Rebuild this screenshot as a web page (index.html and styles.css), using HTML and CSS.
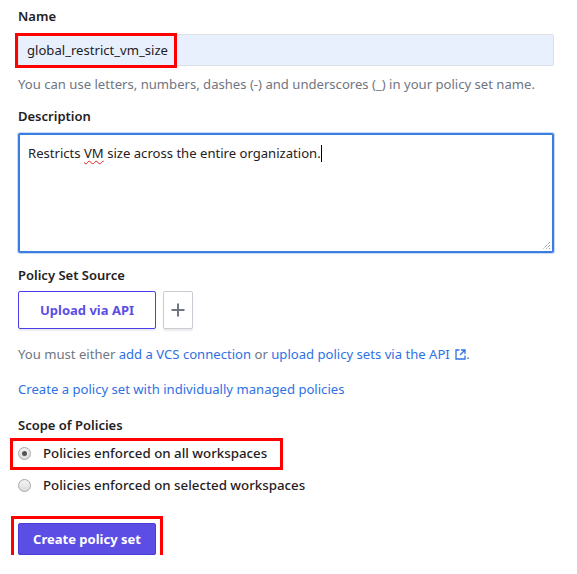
FILE: index.html
```html
<!DOCTYPE html>
<html>
<head>
<meta charset="utf-8">
<link rel="stylesheet" href="styles.css">
</head>
<body>
<form class="form">
  <div class="field">
    <label class="label">Name</label>
    <div class="name-wrap">
      <div class="input">global_restrict_vm_size</div>
      <div class="mark mark-name"></div>
    </div>
    <p class="hint">You can use letters, numbers, dashes (-) and underscores (_) in your policy set name.</p>
  </div>
  <div class="field">
    <label class="label">Description</label>
    <div class="textarea">Restricts <span class="spell">VM</span> size across the entire organization.<span class="caret"></span>
      <svg class="grip" width="10" height="10" viewBox="0 0 10 10"><path d="M9 2 L2 9 M9 5 L5 9 M9 8 L8 9" stroke="#777" stroke-width="1" stroke-dasharray="1 1"/></svg>
    </div>
  </div>
  <div class="field">
    <label class="label">Policy Set Source</label>
    <div class="source-row">
      <button type="button" class="btn-outline">Upload via API</button>
      <button type="button" class="btn-plus" aria-label="Add">
        <svg width="14" height="14" viewBox="0 0 14 14"><path d="M7 0.5v13M0.5 7h13" stroke="#6f7682" stroke-width="2"/></svg>
      </button>
    </div>
    <p class="text">You must either <a class="link">add a VCS connection</a> or <a class="link">upload policy sets via the API <svg class="ext" width="11" height="11" viewBox="0 0 11 11"><path d="M4.5 1H1v9h9V6.5" fill="none" stroke="#2e71e5" stroke-width="1.3"/><path d="M6 1h4v4M10 1 5 6" fill="none" stroke="#2e71e5" stroke-width="1.3"/></svg></a>.</p>
    <p class="text text-last"><a class="link">Create a policy set with individually managed policies</a></p>
  </div>
  <div class="field">
    <label class="label">Scope of Policies</label>
    <div class="radios">
      <label class="radio marked"><span class="dot on"></span>Policies enforced on all workspaces</label>
      <label class="radio"><span class="dot"></span>Policies enforced on selected workspaces</label>
    </div>
  </div>
  <div class="actions">
    <button type="button" class="btn-primary">Create policy set</button>
  </div>
</form>
</body>
</html>
```
FILE: styles.css
```css
*, *::before, *::after { box-sizing: border-box; }
body {
  margin: 0;
  background: #fff;
  font-family: "Noto Sans", "Open Sans", sans-serif;
  font-size: 13.1px;
  color: #1f2124;
}
.form {
  padding: 6px 23px 0 18px;
}
.label {
  display: block;
  font-weight: 600;
  font-size: 13px;
  line-height: 20px;
  color: #1f2124;
}
.field {
  display: flow-root;
  margin-bottom: 12px;
}
.name-wrap {
  position: relative;
  margin-top: 8px;
}
.input {
  height: 32px;
  background: #e8f0fe;
  border: 1px solid #dcdfe4;
  border-radius: 2px;
  padding: 0 8px;
  line-height: 30px;
  color: #1f2124;
}
.mark {
  position: absolute;
  border: 3px solid #ff0000;
}
.mark-name {
  left: -3px;
  top: -1px;
  width: 162px;
  height: 35px;
}
.hint {
  margin: 8px 0 0;
  color: #6f7682;
  line-height: 20px;
}
.textarea {
  position: relative;
  margin-top: 7px;
  height: 120px;
  border: 2px solid #3a7ee0;
  box-shadow: 0 0 0 1px #c6d9f7;
  border-radius: 2px;
  padding: 8px 8px;
  line-height: 20px;
  color: #1f2124;
}
.spell {
  text-decoration: underline wavy #e02020;
  text-decoration-thickness: 1px;
  text-underline-offset: 2px;
}
.caret {
  display: inline-block;
  width: 1px;
  height: 17px;
  background: #000;
  vertical-align: -4px;
}
.grip {
  position: absolute;
  right: 1px;
  bottom: 1px;
}
.source-row {
  display: flex;
  gap: 7px;
  margin-top: 6px;
}
.btn-outline {
  width: 138px;
  height: 38px;
  background: #fff;
  border: 1px solid #4b3cf0;
  border-radius: 2px;
  box-shadow: 0 2px 1px rgba(0,0,0,0.08);
  font-family: inherit;
  font-size: 13px;
  font-weight: 700;
  color: #5c4ee5;
}
.btn-plus {
  width: 30px;
  height: 38px;
  background: #fff;
  border: 1px solid #c8ccd3;
  border-radius: 2px;
  box-shadow: 0 2px 1px rgba(0,0,0,0.08);
  display: flex;
  align-items: center;
  justify-content: center;
  padding: 0;
}
.text {
  margin: 15px 0 0;
  color: #6f7682;
  line-height: 20px;
}
.text-last { margin-bottom: 4px; }
.link { color: #2e71e5; }
.ext { vertical-align: -1px; margin-left: 2px; }
.radios {
  display: flex;
  flex-direction: column;
  gap: 12px;
  margin-top: 8px;
}
.radio {
  position: relative;
  display: flex;
  align-items: center;
  gap: 12px;
  padding-left: 0;
  font-weight: 500;
  font-size: 13.3px;
  line-height: 20px;
  color: #1f2124;
}
.marked::after {
  content: "";
  position: absolute;
  left: -8px;
  top: -5px;
  width: 273px;
  height: 32px;
  border: 3px solid #ff0000;
}
.dot {
  width: 13px;
  height: 13px;
  border-radius: 50%;
  border: 1px solid #a7a7a7;
  background: linear-gradient(#f3f3f3, #dcdcdc);
  flex: none;
  position: relative;
}
.dot.on::after {
  content: "";
  position: absolute;
  left: 3px;
  top: 3px;
  width: 5px;
  height: 5px;
  border-radius: 50%;
  background: #555;
}
.actions {
  margin-top: 16px;
  display: inline-block;
  outline: 3px solid #ff0000;
  outline-offset: 4px;
}
.btn-primary {
  display: block;
  width: 138px;
  height: 32px;
  background: #5c4ee5;
  border: 1px solid #4a3cd6;
  border-radius: 2px;
  box-shadow: 0 2px 1px rgba(0,0,0,0.1);
  font-family: inherit;
  font-size: 13px;
  font-weight: 700;
  color: #fff;
}
```
